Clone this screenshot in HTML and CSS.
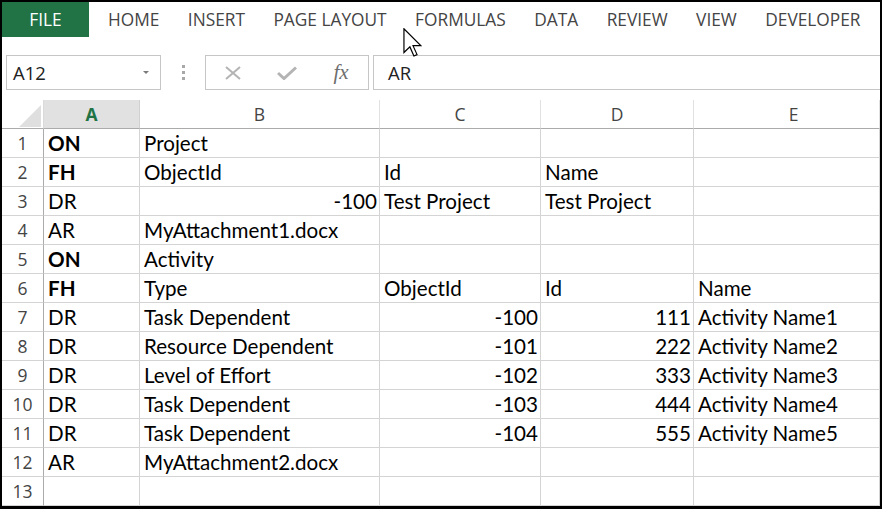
FILE: index.html
```html
<!DOCTYPE html>
<html>
<head>
<meta charset="utf-8">
<link rel="stylesheet" href="styles.css">
</head>
<body>
<div class="frame">
  <div class="tabs">
    <div class="tab file">FILE</div>
    <div class="tab">HOME</div>
    <div class="tab">INSERT</div>
    <div class="tab">PAGE LAYOUT</div>
    <div class="tab">FORMULAS</div>
    <div class="tab">DATA</div>
    <div class="tab">REVIEW</div>
    <div class="tab">VIEW</div>
    <div class="tab">DEVELOPER</div>
  </div>
  <div class="fbar">
    <div class="namebox"><span class="nb-text">A12</span><span class="caret"></span></div>
    <div class="grip"><i></i><i></i><i></i></div>
    <div class="btns">
      <div class="btn"><svg width="18" height="14" viewBox="0 0 18 14"><path d="M2 1 L16 13 M16 1 L2 13" stroke="#b4b4b4" stroke-width="2" fill="none"/></svg></div>
      <div class="btn"><svg width="20" height="14" viewBox="0 0 20 14"><path d="M1 7 L7 12.5 L19 1.5" stroke="#b4b4b4" stroke-width="3" fill="none"/></svg></div>
      <div class="btn"><span class="fx">fx</span></div>
    </div>
    <div class="finput">AR</div>
  </div>
  <div class="sheet">
    <div class="corner"><svg width="22" height="22" viewBox="0 0 22 22"><path d="M22 0 L22 22 L0 22 Z" fill="#dfdfdf"/></svg></div>
    <div class="ch sel">A</div><div class="ch">B</div><div class="ch">C</div><div class="ch">D</div><div class="ch last">E</div>

    <div class="rh">1</div><div class="c b">ON</div><div class="c">Project</div><div class="c"></div><div class="c"></div><div class="c"></div>
    <div class="rh">2</div><div class="c b">FH</div><div class="c">ObjectId</div><div class="c">Id</div><div class="c">Name</div><div class="c"></div>
    <div class="rh">3</div><div class="c">DR</div><div class="c r">-100</div><div class="c">Test Project</div><div class="c">Test Project</div><div class="c"></div>
    <div class="rh">4</div><div class="c">AR</div><div class="c">MyAttachment1.docx</div><div class="c"></div><div class="c"></div><div class="c"></div>
    <div class="rh">5</div><div class="c b">ON</div><div class="c">Activity</div><div class="c"></div><div class="c"></div><div class="c"></div>
    <div class="rh">6</div><div class="c b">FH</div><div class="c">Type</div><div class="c">ObjectId</div><div class="c">Id</div><div class="c">Name</div>
    <div class="rh">7</div><div class="c">DR</div><div class="c">Task Dependent</div><div class="c r">-100</div><div class="c r">111</div><div class="c">Activity Name1</div>
    <div class="rh">8</div><div class="c">DR</div><div class="c">Resource Dependent</div><div class="c r">-101</div><div class="c r">222</div><div class="c">Activity Name2</div>
    <div class="rh">9</div><div class="c">DR</div><div class="c">Level of Effort</div><div class="c r">-102</div><div class="c r">333</div><div class="c">Activity Name3</div>
    <div class="rh">10</div><div class="c">DR</div><div class="c">Task Dependent</div><div class="c r">-103</div><div class="c r">444</div><div class="c">Activity Name4</div>
    <div class="rh">11</div><div class="c">DR</div><div class="c">Task Dependent</div><div class="c r">-104</div><div class="c r">555</div><div class="c">Activity Name5</div>
    <div class="rh">12</div><div class="c">AR</div><div class="c">MyAttachment2.docx</div><div class="c"></div><div class="c"></div><div class="c"></div>
    <div class="rh">13</div><div class="c"></div><div class="c"></div><div class="c"></div><div class="c"></div><div class="c"></div>
  </div>
  <svg class="cursor" width="19" height="29" viewBox="0 0 12.5 19.5"><path d="M0.5 0.5 V16.5 L4.5 12.7 L7.2 18.8 L9.3 17.9 L6.6 11.9 H11.8 Z" fill="#fff" stroke="#000" stroke-width="0.8" stroke-linejoin="miter"/></svg>
</div>
</body>
</html>
```
FILE: styles.css
```css
* { box-sizing: border-box; }
html, body { margin: 0; padding: 0; background: #fff; }
.frame {
  position: relative;
  width: 882px;
  height: 509px;
  border: 2px solid #000;
  border-bottom-width: 3px;
  overflow: hidden;
  background: #fff;
}
.tabs {
  display: flex;
  height: 35px;
  align-items: stretch;
  gap: 28.5px;
  font-family: "Open Sans", sans-serif;
  font-size: 17.3px;
  color: #444;
}
.tab {
  display: flex;
  align-items: center;
  white-space: nowrap;
  padding-bottom: 1px;
}
.tab.file {
  width: 87px;
  justify-content: center;
  background: #217346;
  color: #fff;
  margin-right: -9.5px;
}
.fbar {
  display: flex;
  height: 35px;
  margin-top: 18px;
  font-family: "Open Sans", sans-serif;
}
.namebox {
  margin-left: 4px;
  width: 155px;
  border: 1px solid #c6c6c6;
  display: flex;
  align-items: center;
  justify-content: space-between;
  padding: 0 11px 0 6px;
}
.nb-text { font-size: 18.5px; color: #222; }
.caret {
  width: 0; height: 0;
  border-left: 3px solid transparent;
  border-right: 3px solid transparent;
  border-top: 3px solid #7a7a7a;
}
.grip {
  width: 44px;
  display: flex;
  flex-direction: column;
  align-items: center;
  justify-content: center;
  gap: 3px;
}
.grip i {
  display: block;
  width: 3px;
  height: 3px;
  background: #a8a8a8;
}
.btns {
  width: 164px;
  border: 1px solid #c6c6c6;
  display: flex;
}
.btn {
  flex: 1;
  display: flex;
  align-items: center;
  justify-content: center;
}
.fx {
  font-family: "Liberation Serif", serif;
  font-style: italic;
  font-size: 21px;
  color: #6e6e6e;
}
.finput {
  flex: 1;
  margin-left: 4px;
  border: 1px solid #c6c6c6;
  border-right: none;
  display: flex;
  align-items: center;
  padding-left: 14px;
  font-size: 18.5px;
  color: #222;
}
.sheet {
  display: grid;
  grid-template-columns: 42px 96px 240px 161px 153px 186px;
  grid-auto-rows: 29px;
  margin-top: 10px;
}
.corner {
  border-bottom: 1px solid #ababab;
  border-right: 1px solid #dadada;
  display: flex;
  align-items: flex-end;
  justify-content: flex-end;
  padding: 0 2px 1px 0;
}
.ch {
  font-family: "Open Sans", sans-serif;
  font-size: 17.5px;
  color: #444;
  text-align: center;
  line-height: 28px;
  border-right: 1px solid #e1e1e1;
  border-bottom: 1px solid #ababab;
}
.ch.last { padding-left: 14px; }
.ch.sel {
  background: #e1e1e1;
  color: #217346;
  font-weight: 700;
  border-right-color: #d0d0d0;
}
.rh {
  font-family: "Open Sans", sans-serif;
  font-size: 17.5px;
  color: #444;
  text-align: center;
  line-height: 28px;
  border-right: 1px solid #ababab;
  border-bottom: 1px solid #d4d4d4;
}
.c {
  font-family: Lato, "Liberation Sans", sans-serif;
  font-size: 20.6px;
  color: #000;
  line-height: 28px;
  padding: 0 2px 0 4px;
  white-space: nowrap;
  overflow: hidden;
  border-right: 1px solid #d4d4d4;
  border-bottom: 1px solid #d4d4d4;
}
.c.b { font-weight: 700; }
.c.r { text-align: right; }
.cursor {
  position: absolute;
  left: 401px;
  top: 26px;
}
```
